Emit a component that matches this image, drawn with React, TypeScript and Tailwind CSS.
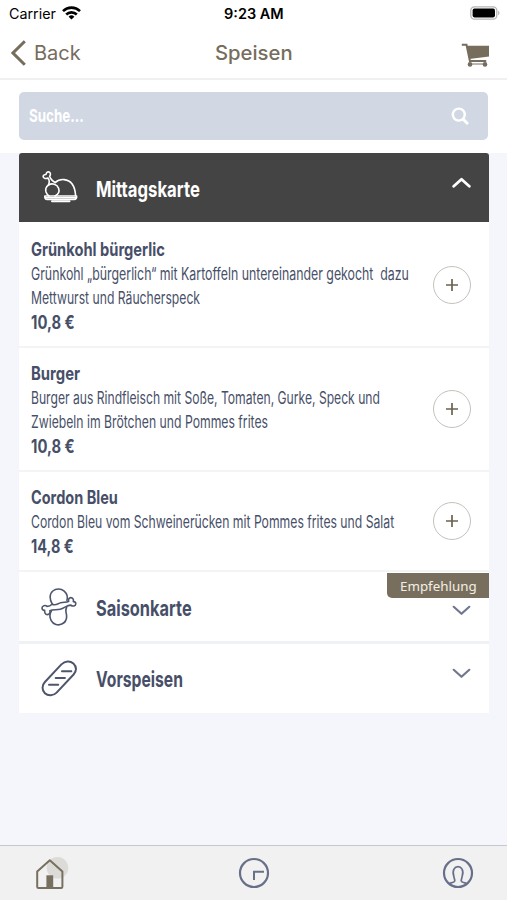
import { useLayoutEffect, useRef, useState } from "react";

type FitTextProps = {
  width: number;
  className?: string;
  children: string;
};

// Condenses a line of text to the given width
const FitText = ({ width, className = "", children }: FitTextProps) => {
  const ref = useRef<HTMLSpanElement>(null);
  const [scale, setScale] = useState(1);

  useLayoutEffect(() => {
    if (ref.current) {
      setScale(width / ref.current.offsetWidth);
    }
  }, [width, children, className]);

  return (
    <span className="flex" style={{ width }}>
      <span
        ref={ref}
        className={`shrink-0 origin-left whitespace-pre ${className}`}
        style={{ transform: `scaleX(${scale})` }}
      >
        {children}
      </span>
    </span>
  );
};

const dishes = [
  {
    name: "Grünkohl bürgerlic",
    nameWidth: 134,
    lines: [
      { text: "Grünkohl „bürgerlich“ mit Kartoffeln untereinander gekocht  dazu", width: 378 },
      { text: "Mettwurst und Räucherspeck", width: 169 },
    ],
    price: "10,8 €",
    priceWidth: 44,
  },
  {
    name: "Burger",
    nameWidth: 49,
    lines: [
      { text: "Burger aus Rindfleisch mit Soße, Tomaten, Gurke, Speck und", width: 349 },
      { text: "Zwiebeln im Brötchen und Pommes frites", width: 237 },
    ],
    price: "10,8 €",
    priceWidth: 44,
  },
  {
    name: "Cordon Bleu",
    nameWidth: 87,
    lines: [
      { text: "Cordon Bleu vom Schweinerücken mit Pommes frites und Salat", width: 363 },
    ],
    price: "14,8 €",
    priceWidth: 43,
  },
];

const StatusBar = () => (
  <div className="grid h-7 grid-cols-3 items-center pl-[9px] pr-[7px] text-black">
    <div className="flex items-center gap-1.5">
      <FitText width={47} className="text-[14px] leading-5">Carrier</FitText>
      <svg className="mb-0.5 h-[14px] w-[19px]" viewBox="0 0 19 14" fill="none" stroke="currentColor" strokeWidth="2.6">
        <path d="M1 5.1a12.2 12.2 0 0 1 17 0" />
        <path d="M4.2 8.5a7.6 7.6 0 0 1 10.6 0" />
        <path d="M9.5 13.6 6.6 10.7a4.2 4.2 0 0 1 5.8 0z" fill="currentColor" stroke="none" />
      </svg>
    </div>
    <div className="flex justify-center">
      <FitText width={60} className="text-[14px] font-semibold leading-5">9:23 AM</FitText>
    </div>
    <div className="flex justify-end">
      <svg className="mb-0.5 h-[14px] w-[30px]" viewBox="0 0 30 14">
        <rect x=".8" y=".8" width="26" height="12.4" rx="3.6" fill="#fff" stroke="#b5b5b5" strokeWidth="1.3" />
        <rect x="2.6" y="2.6" width="22.4" height="8.8" rx="1.8" fill="#000" />
        <path d="M28.1 4.8c1.8.6 1.8 3.8 0 4.4z" fill="#b5b5b5" />
      </svg>
    </div>
  </div>
);

const NavBar = () => (
  <header className="grid h-[52px] grid-cols-3 items-center border-b-2 border-[#f0f0f0] pl-[11px] pr-[17px] text-[#766d5d]">
    <div className="flex items-center gap-2">
      <svg className="h-[26px] w-[15px]" viewBox="0 0 15 26" fill="none" stroke="currentColor" strokeWidth="3">
        <path d="M13.8 1.3 2 13l11.8 11.7" />
      </svg>
      <FitText width={47} className="text-[20px] leading-6">Back</FitText>
    </div>
    <div className="flex justify-center pl-2">
      <FitText width={78} className="text-[20px] font-medium leading-6">Speisen</FitText>
    </div>
    <div className="flex justify-end pt-1">
      <svg className="h-[25px] w-[29px]" viewBox="0 0 29 25" fill="none" stroke="currentColor">
        <path d="M.8 1.7h4.7L8.9 18h16.3" strokeWidth="2" />
        <path d="M6 2.8h22v10.8L8.3 16z" fill="currentColor" stroke="none" />
        <circle cx="9" cy="21.4" r="2.3" fill="currentColor" stroke="none" />
        <circle cx="24" cy="21.4" r="2.3" fill="currentColor" stroke="none" />
        <path d="M8 21h16" strokeWidth="1" />
      </svg>
    </div>
  </header>
);

const SearchBox = () => (
  <div className="h-[73px] bg-white px-[19px] pt-3">
    <div className="flex h-[48px] items-center justify-between rounded-[5px] bg-[#d1d8e4] pl-2.5 pr-[19px] text-white">
      <FitText width={55} className="text-[18px] font-bold leading-6">Suche...</FitText>
      <svg className="h-[18px] w-[18px]" viewBox="0 0 18 18" fill="none" stroke="currentColor" strokeWidth="2.4">
        <circle cx="7.8" cy="7.6" r="6" />
        <path d="m12 12 5 5" strokeWidth="3" />
      </svg>
    </div>
  </div>
);

const RoastIcon = () => (
  <svg className="h-[34px] w-[38px]" viewBox="0 0 38 34" fill="none" stroke="#fff" strokeWidth="1.6" strokeLinejoin="round" strokeLinecap="round">
    <path d="M7.4 14.2C8.6 11.4 8.6 9 7 7c-2.6 1.4-5.6-.3-4.6-2.4.5-1 1.6-1.2 2.6-1.1C5.2 1 7.6.2 8.8 1.6c1 1.2.6 2.6-.2 3.6 1 2.6 2.6 5 5.8 6.2" />
    <path d="M7.4 14.2C4.9 16 4.3 18.6 5 21c.6 1.7 1.6 3 3 4" />
    <path d="M7.4 14.2c3.6-2.6 8.8-1.1 10.2 3 1.1 3.3-.4 6.2-3.6 7.8" />
    <path d="M14.4 11.4C16.6 9.2 19.8 8.4 23 8.6 30 9.2 34 15 34.6 24.8" />
    <path d="M3.8 25h31.8c.3 2.2-.7 3.5-2.4 3.5H6.2c-1.8 0-2.6-1.3-2.4-3.5zM4.4 26.7h30.4" />
    <path d="M11 30.3h17.5" strokeWidth="2" />
  </svg>
);

const DrumstickIcon = () => (
  <svg className="h-[38px] w-[36px]" viewBox="0 0 36 38" fill="none" stroke="#4e566e" strokeWidth="1.6" strokeLinejoin="round">
    <path d="M11.4 16.4C8.4 11.8 8.2 6 11.8 3c3.2-2.7 8.2-2.6 11.4.2 3.2 2.9 3.8 6.4 2.6 9.8" />
    <path d="M11 16.2c-1.6 1.8-3.2 2.2-5 2.2-1.6-1.6-5-.8-5 1.7 0 1.5 1.3 2.3 2.7 2.3-.4 2.2.7 4.2 2.7 4.2 2.1 0 2.9-1.9 2.5-3.9 2.8-1.5 6.6-.4 10.4-1.4 4.2-1.1 6.6-4.3 10.6-4.2 1.7 1.7 4.9 1 4.9-1.3 0-1.5-1.2-2.2-2.5-2.2.6-2-.5-4-2.4-4-2 0-2.8 2-2.2 3.7-2.2 1.5-4.8.6-8 1.5-3.2.9-4.9 3-8.7 1.4z" />
    <path d="M10.8 22.4c-2.2 3-2.4 6.8-.6 10.2 2 3.8 6.9 5.2 10.6 3.5 4.4-2.1 5.4-6.6 4.4-10.8-.6-2.6-.4-4.4.6-6.4" />
  </svg>
);

const BreadIcon = () => (
  <svg className="h-[38px] w-[36px]" viewBox="0 0 36 38" fill="none" stroke="#4e566e" strokeWidth="2" strokeLinecap="round">
    <path d="M3.9 22 20.4 4.4c3.7-3.6 8.6-3.9 12-.9 3.3 3.1 3.5 7.5.2 11L15.6 32.6c-3.4 3.4-8.6 3.6-11.7.6-3.1-3.1-3.2-7.8 0-11.2z" />
    <path d="M8 24.7h9.2M14.7 18h9.2M21 11.2h9.3" />
  </svg>
);

const Chevron = ({ className }: { className: string }) => (
  <svg className={`h-[11px] w-[19px] ${className}`} viewBox="0 0 19 11" fill="none" stroke="currentColor" strokeLinecap="round" strokeLinejoin="round">
    <path d="m1.7 1.8 7.8 7 7.8-7" />
  </svg>
);

const MenuCard = () => (
  <main className="mx-[19px] w-[470px] text-[#474f68]">
    <div className="flex h-[69px] items-center rounded-t-[3px] bg-[#444] pl-[22px] pr-[18px] text-white">
      <RoastIcon />
      <div className="ml-[17px] flex-1 pt-0.5">
        <FitText width={104} className="text-[22px] font-bold leading-7">Mittagskarte</FitText>
      </div>
      <Chevron className="mb-2.5 rotate-180 stroke-[2.8]" />
    </div>

    <div className="bg-white pt-0.5">
      {dishes.map((dish) => (
        <div
          key={dish.name}
          className="flex items-center justify-between border-b-2 border-[#f3f4f6] pb-[11px] pl-3 pr-[18px] pt-[13px]"
        >
          <div>
            <FitText width={dish.nameWidth} className="text-[18.5px] font-bold leading-[25px]">{dish.name}</FitText>
            {dish.lines.map((line) => (
              <FitText key={line.text} width={line.width} className="text-[17px] leading-6">{line.text}</FitText>
            ))}
            <FitText width={dish.priceWidth} className="text-[18.5px] font-bold leading-[25px]">{dish.price}</FitText>
          </div>
          <button className="mb-0.5 flex h-[38px] w-[38px] items-center justify-center rounded-full border border-[#c5c2bd] text-[#6b6352]">
            <svg className="h-3 w-3" viewBox="0 0 12 12" stroke="currentColor" strokeWidth="1.7">
              <path d="M6 0v12M0 6h12" />
            </svg>
          </button>
        </div>
      ))}
    </div>

    <div className="relative flex h-[72px] items-center border-b-[3px] border-[#f0f1f4] bg-white pl-[22px] pr-[18px]">
      <DrumstickIcon />
      <div className="ml-[19px] flex-1 pt-0.5">
        <FitText width={96} className="text-[22px] font-bold leading-7">Saisonkarte</FitText>
      </div>
      <Chevron className="mt-2 stroke-[2.2] text-[#70778f]" />
      <div className="absolute right-0 top-px flex h-[25px] w-[102px] items-center justify-center rounded-bl-[5px] bg-[#786e5d] text-[#f3eee4]">
        <FitText width={77} className="font-['Noto_Sans',sans-serif] text-[13px] leading-5">Empfehlung</FitText>
      </div>
    </div>

    <div className="flex h-[69px] items-center bg-white pl-[22px] pr-[18px]">
      <BreadIcon />
      <div className="ml-[19px] flex-1 pt-px">
        <FitText width={87} className="text-[22px] font-bold leading-7">Vorspeisen</FitText>
      </div>
      <Chevron className="mb-2.5 stroke-[2.2] text-[#70778f]" />
    </div>
  </main>
);

const TabBar = () => (
  <nav className="flex h-[55px] items-center justify-between border-t border-[#c6c8cd] bg-[#f1f1f1] px-[33px] text-[#687089]">
    <button>
      <svg className="h-[34px] w-[32px]" viewBox="-1 0 32 34" overflow="visible">
        <circle cx="23.5" cy="11.8" r="10.8" fill="#dcdbd8" />
        <path d="M3.2 15.5 15.8 4.2l12.6 11.3v15.2q0 1.3-1.3 1.3H4.5q-1.3 0-1.3-1.3z" fill="none" stroke="#77705e" strokeWidth="2" strokeLinejoin="round" />
        <path d="M12.4 19.3h6.8V32h-6.8z" fill="#77705e" />
      </svg>
    </button>
    <button>
      <svg className="h-[32px] w-[32px]" viewBox="0 0 32 32" fill="none" stroke="currentColor" strokeWidth="2.2">
        <circle cx="16" cy="16" r="14" />
        <path d="M16 23v-8.3h10" strokeWidth="2" />
      </svg>
    </button>
    <button>
      <svg className="h-[32px] w-[32px]" viewBox="0 0 32 32" fill="none" stroke="currentColor" strokeWidth="2.2">
        <circle cx="16" cy="16" r="14" />
        <path d="M7.5 26.4c3.2-1 5.2-1.2 5.3-2.7 0-1.7-.7-2-1-4.5-1-2.7-.8-5.4.3-7.3 1.6-3.1 6.2-3.1 7.8 0 1.1 1.9 1.3 4.6.3 7.3-.3 2.5-1 2.8-1 4.5.1 1.5 2.1 1.7 5.3 2.7" strokeWidth="1.7" />
      </svg>
    </button>
  </nav>
);

const App = () => {
  return (
    <div className="flex h-[900px] w-[507px] flex-col overflow-hidden bg-[#f4f6fb] font-[Inter,'Liberation_Sans',sans-serif]">
      <div className="bg-white">
        <StatusBar />
        <NavBar />
      </div>
      <SearchBox />
      <MenuCard />
      <div className="flex-1" />
      <TabBar />
    </div>
  );
};

export default App;
